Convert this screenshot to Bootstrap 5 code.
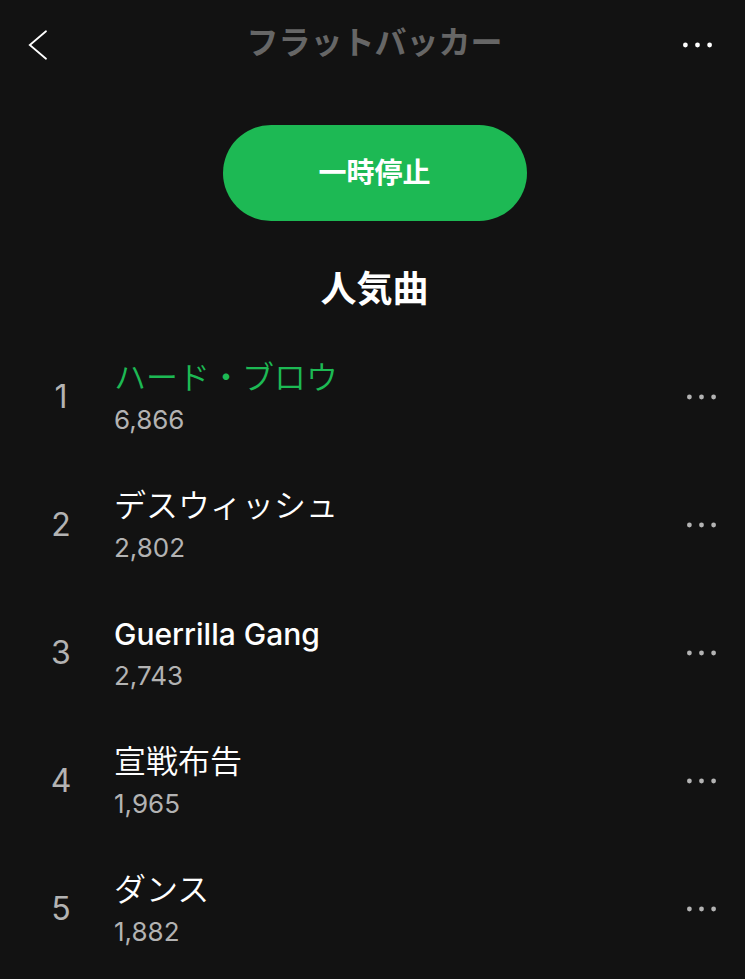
<!DOCTYPE html>
<html lang="ja">
<head>
<meta charset="utf-8">
<meta name="viewport" content="width=device-width, initial-scale=1">
<title>フラットバッカー</title>
<link href="https://cdn.jsdelivr.net/npm/bootstrap@5.3.0/dist/css/bootstrap.min.css" rel="stylesheet">
<style>
body { background: #121212; color: #fff; font-family: Inter, "Noto Sans CJK JP", sans-serif; }
.icon-btn { width: 48px; height: 48px; color: #fff; }
.icon-btn svg { display: block; }
.artist-bar { height: 90px; padding: 0 24px 0 14px; }
.artist-name { font-size: 32px; line-height: 40px; font-weight: 700; color: #666; padding: 0 0 4px 14px; }
.hero { padding: 35px 0 0 4px; }
.pause-btn { width: 304px; height: 96px; background: #1db954; color: #fff; font-size: 28px; font-weight: 700; }
.pause-btn:hover, .pause-btn:active { background: #1ed760; color: #fff; }
.section-title { font-size: 36px; line-height: 48px; margin: 44px 0 20px; font-weight: 700; }
.track { height: 128px; padding: 0 20px 0 32px; }
.track-no { width: 58px; font-size: 32px; color: #b3b3b3; }
.track-text { margin-left: 24px; padding-top: 2px; }
.track-title { font-size: 32px; line-height: 44px; font-weight: 350; }
.latin { font-size: 30px; font-weight: 500; }
.track-plays { font-size: 26px; line-height: 40px; color: #b3b3b3; }
.playing { color: #1db954; }
.track .icon-btn { color: #b3b3b3; }
</style>
</head>
<body>
<svg class="d-none"><symbol id="dots" viewBox="0 0 32 6"><circle cx="4.4" cy="3" r="2.4"/><circle cx="16.5" cy="3" r="2.4"/><circle cx="28.6" cy="3" r="2.4"/></symbol></svg>
<header class="artist-bar d-flex align-items-center justify-content-between">
<button class="btn p-0 border-0 icon-btn d-flex align-items-center justify-content-center" aria-label="戻る"><svg width="20" height="30" viewBox="0 0 20 30" fill="none" stroke="currentColor" stroke-width="1.8"><path d="M18 1.3 1.8 15 18 28.7" stroke-linecap="round"/></svg></button>
<h1 class="artist-name m-0 flex-grow-1 text-center">フラットバッカー</h1>
<button class="btn p-0 border-0 icon-btn d-flex align-items-center justify-content-center" aria-label="メニュー"><svg width="32" height="6" fill="currentColor"><use href="#dots"/></svg></button>
</header>
<main>
<div class="hero text-center"><button class="btn rounded-pill border-0 pause-btn">一時停止</button>
<h2 class="section-title">人気曲</h2></div>
<ol class="list-unstyled m-0">
<li class="track d-flex align-items-center"><span class="track-no text-center">1</span><div class="track-text flex-grow-1"><div class="track-title playing">ハード・ブロウ</div><div class="track-plays">6,866</div></div><button class="btn p-0 border-0 icon-btn d-flex align-items-center justify-content-center" aria-label="ハード・ブロウのメニュー"><svg width="32" height="6" fill="currentColor"><use href="#dots"/></svg></button></li>
<li class="track d-flex align-items-center"><span class="track-no text-center">2</span><div class="track-text flex-grow-1"><div class="track-title">デスウィッシュ</div><div class="track-plays">2,802</div></div><button class="btn p-0 border-0 icon-btn d-flex align-items-center justify-content-center" aria-label="デスウィッシュのメニュー"><svg width="32" height="6" fill="currentColor"><use href="#dots"/></svg></button></li>
<li class="track d-flex align-items-center"><span class="track-no text-center">3</span><div class="track-text flex-grow-1"><div class="track-title latin">Guerrilla Gang</div><div class="track-plays">2,743</div></div><button class="btn p-0 border-0 icon-btn d-flex align-items-center justify-content-center" aria-label="Guerrilla Gangのメニュー"><svg width="32" height="6" fill="currentColor"><use href="#dots"/></svg></button></li>
<li class="track d-flex align-items-center"><span class="track-no text-center">4</span><div class="track-text flex-grow-1"><div class="track-title">宣戦布告</div><div class="track-plays">1,965</div></div><button class="btn p-0 border-0 icon-btn d-flex align-items-center justify-content-center" aria-label="宣戦布告のメニュー"><svg width="32" height="6" fill="currentColor"><use href="#dots"/></svg></button></li>
<li class="track d-flex align-items-center"><span class="track-no text-center">5</span><div class="track-text flex-grow-1"><div class="track-title">ダンス</div><div class="track-plays">1,882</div></div><button class="btn p-0 border-0 icon-btn d-flex align-items-center justify-content-center" aria-label="ダンスのメニュー"><svg width="32" height="6" fill="currentColor"><use href="#dots"/></svg></button></li>
</ol>
</main>
<script src="https://cdn.jsdelivr.net/npm/bootstrap@5.3.0/dist/js/bootstrap.bundle.min.js"></script>
</body>
</html>
